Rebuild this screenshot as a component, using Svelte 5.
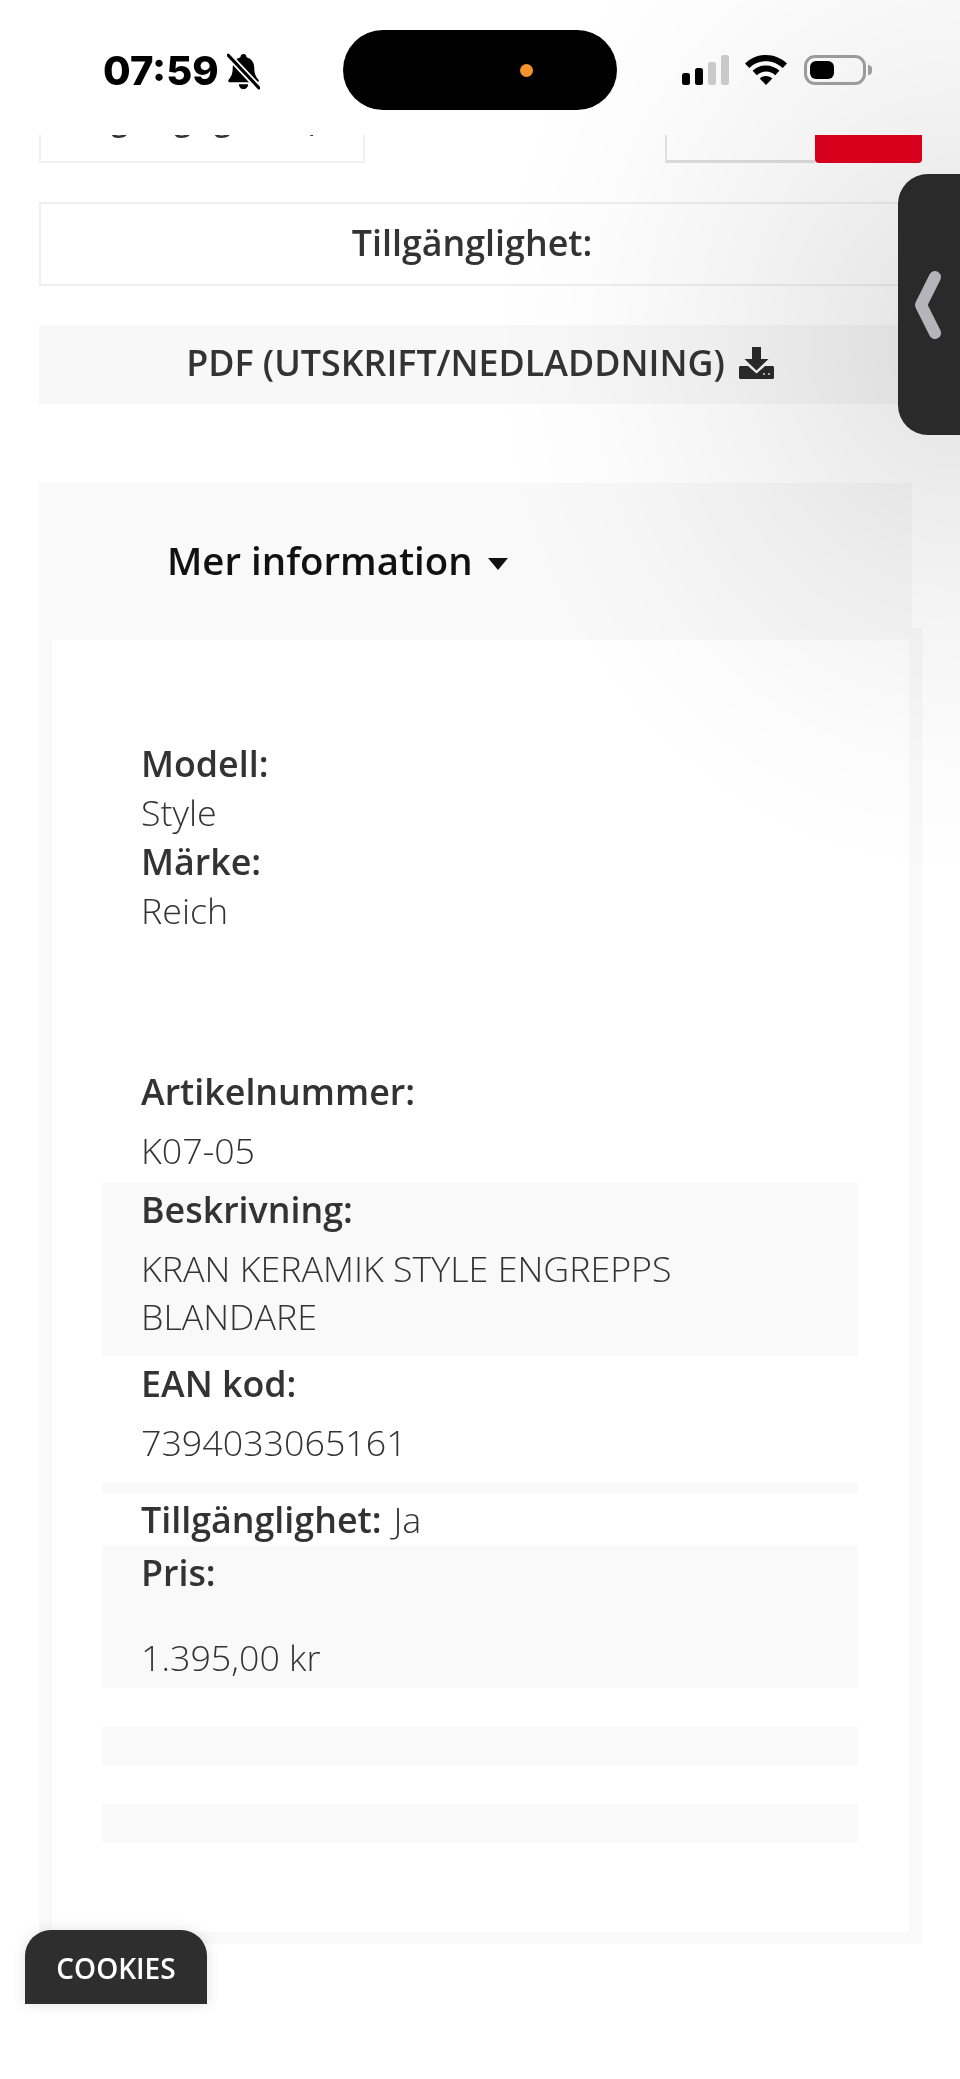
<script>
  const bars = [
    { x: 0, h: 12, on: true },
    { x: 13, h: 17, on: true },
    { x: 26, h: 23, on: false },
    { x: 39, h: 30, on: false }
  ];

  const rows = [
    { label: "Beskrivning:", value: ["KRAN KERAMIK STYLE ENGREPPS", "BLANDARE"], cls: "desc" },
    { label: "EAN kod:", value: ["7394033065161"], cls: "ean" }
  ];
</script>

<div class="page">
  <header class="status">
    <div class="left">
      <span class="time">07:59</span>
      <svg class="bell" viewBox="0 0 32 36" width="33" height="37" aria-hidden="true">
        <path d="M16 1c2 0 3 1.400 3 3.200 5 1.400 7.500 5.500 7.500 10.800 0 5 1.500 8 4 11 .8 1 .2 2.500-1.200 2.500H2.700c-1.400 0-2-1.500-1.200-2.500 2.500-3 4-6 4-11 0-5.300 2.500-9.400 7.500-10.800C13 2.400 14 1 16 1z" fill="#000" />
        <path d="M11.500 30.500h9c0 2.800-2 4.800-4.500 4.800s-4.500-2-4.500-4.800z" fill="#000" />
        <path d="M1 2l30 32" stroke="#fff" stroke-width="6.500" />
        <path d="M1 2l30 32" stroke="#000" stroke-width="3" stroke-linecap="round" />
      </svg>
    </div>
    <div class="island"><span class="dot"></span></div>
    <div class="right">
      <svg class="signal" viewBox="0 0 47 30" width="47" height="30" aria-hidden="true">
        {#each bars as b}
          <rect x={b.x} y={30 - b.h} width="8" height={b.h} rx="2.500" fill={b.on ? "#000" : "#c9c9c9"} />
        {/each}
      </svg>
      <svg class="wifi" viewBox="0 0 42 30" width="42" height="30" aria-hidden="true">
        <path d="M21 0C13 0 6 3 0 8.500l4.300 4.500C9 8.600 14.700 6.200 21 6.200S33 8.600 37.700 13L42 8.500C36 3 29 0 21 0z" />
        <path d="M21 10.500c-5.200 0-9.800 2-13.400 5.300l4.200 4.400c2.500-2.200 5.700-3.600 9.200-3.600s6.700 1.400 9.200 3.600l4.200-4.400C30.800 12.500 26.200 10.500 21 10.500z" />
        <path d="M21 21c-2.500 0-4.700.9-6.300 2.400L21 30l6.300-6.600C25.700 21.900 23.500 21 21 21z" />
      </svg>
      <div class="battery"><span class="charge"></span></div>
      <span class="nub"></span>
    </div>
  </header>

  <div class="cut">
    <div class="field">
      <div class="clip">
        <span class="g1">g</span><span class="g2">g</span><span class="g3">g</span><span class="g4">,</span>
      </div>
    </div>
    <div class="buy">
      <div class="qty"></div>
      <div class="red"></div>
    </div>
  </div>

  <div class="stock">Tillgänglighet:</div>

  <div class="pdf">
    <span>PDF (UTSKRIFT/NEDLADDNING)</span>
    <svg viewBox="0 0 35 32" width="35" height="32" aria-hidden="true">
      <path d="M13 0h9v12h7.500L17.500 23.500 5.500 12H13z" fill="#2b2b2b" />
      <path d="M1.500 19H9l8.500 7.500L26 19h7.500c.8 0 1.500.7 1.500 1.500v10c0 .8-.7 1.500-1.500 1.500h-32C.7 32 0 31.300 0 30.500v-10C0 19.700.7 19 1.500 19z" fill="#2b2b2b" />
      <circle cx="25" cy="27" r="1" fill="#ddd" />
      <circle cx="30" cy="27" r="1" fill="#ddd" />
    </svg>
  </div>

  <section class="more">
    <div class="more-head">
      <span>Mer information</span>
      <i class="caret"></i>
    </div>
    <div class="more-body">
      <div class="inner">
        <div class="specs">
          <b>Modell:</b>
          <span>Style</span>
          <b>Märke:</b>
          <span>Reich</span>
        </div>

        <div class="row art">
          <b>Artikelnummer:</b>
          <p>K07-05</p>
        </div>

        {#each rows as r}
          <div class="row {r.cls}">
            <b>{r.label}</b>
            <p>
              {#each r.value as line}
                <span>{line}</span>
              {/each}
            </p>
          </div>
        {/each}

        <div class="band thin"></div>
        <div class="row avail"><b>Tillgänglighet:</b> <em>Ja</em></div>
        <div class="row price">
          <b>Pris:</b>
          <p>1.395,00 kr</p>
        </div>
        <div class="band first"></div>
        <div class="band second"></div>
      </div>
    </div>
  </section>

  <div class="shade"></div>

  <div class="handle">
    <svg viewBox="0 0 34 76" width="34" height="76" aria-hidden="true">
      <path d="M25 10L11 38l14 28" fill="none" stroke="#b4b4ba" stroke-width="12" stroke-linecap="round" stroke-linejoin="round" />
    </svg>
  </div>

  <div class="cookies">COOKIES</div>
</div>

<style>
  :global(body) {
    margin: 0;
    background: #fff;
  }

  .page {
    position: relative;
    width: 960px;
    height: 2079px;
    overflow: hidden;
    background: #fff;
    color: #333;
    font-family: "Open Sans", "Liberation Sans", sans-serif;
  }

  .status {
    position: relative;
    height: 135px;
    z-index: 3;
  }

  .left {
    position: absolute;
    left: 103px;
    top: 50px;
    display: flex;
    align-items: center;
    gap: 8px;
  }

  .time {
    font-family: Inter, "Liberation Sans", sans-serif;
    font-weight: 800;
    font-size: 40px;
    line-height: 42px;
    color: #000;
  }

  .bell {
    display: block;
  }

  .island {
    position: absolute;
    left: 343px;
    top: 30px;
    width: 274px;
    height: 80px;
    border-radius: 40px;
    background: #000;
  }

  .dot {
    position: absolute;
    left: 177px;
    top: 34px;
    width: 13px;
    height: 13px;
    border-radius: 50%;
    background: #f7932e;
  }

  .right {
    position: absolute;
    left: 682px;
    top: 55px;
    display: flex;
    align-items: center;
    height: 30px;
  }

  .signal {
    margin-right: 16px;
  }

  .wifi {
    margin-right: 17px;
  }

  .battery {
    box-sizing: border-box;
    width: 62px;
    height: 30px;
    padding: 3px;
    border: 3px solid #9b9b9b;
    border-radius: 11px;
  }

  .charge {
    display: block;
    width: 24px;
    height: 18px;
    border-radius: 6px;
    background: #000;
  }

  .nub {
    width: 4px;
    height: 10px;
    margin-left: 2px;
    border-radius: 0 4px 4px 0;
    background: #9b9b9b;
  }

  .cut {
    display: flex;
    justify-content: space-between;
    height: 28px;
    padding: 0 38px 0 39px;
  }

  .field {
    box-sizing: border-box;
    width: 326px;
    border: 2px solid #f0f0f0;
    border-top: 0;
  }

  .clip {
    position: relative;
    height: 5px;
    overflow: hidden;
    font-size: 32px;
    font-weight: 600;
    color: #333;
  }

  .clip span {
    position: absolute;
    top: -39px;
  }

  .g1 { left: 70px; }
  .g2 { left: 133px; }
  .g3 { left: 173px; }
  .clip .g4 { left: 268px; top: -37px; }

  .buy {
    display: flex;
    width: 257px;
  }

  .qty {
    box-sizing: border-box;
    width: 150px;
    border-left: 2px solid #e4e4e4;
    border-bottom: 3px solid #dedede;
  }

  /* stays above the shade, the reference keeps this red at full strength */
  .red {
    position: relative;
    z-index: 3;
    flex: 1;
    border-radius: 0 0 4px 4px;
    background: #d6001c;
  }

  .stock {
    box-sizing: border-box;
    display: flex;
    align-items: center;
    justify-content: center;
    width: 866px;
    height: 84px;
    margin: 39px 0 0 39px;
    padding-bottom: 5px;
    border: 2px solid #f0f0f0;
    font-size: 35.8px;
    font-weight: 600;
  }

  .pdf {
    box-sizing: border-box;
    display: flex;
    align-items: center;
    justify-content: center;
    gap: 14px;
    width: 882px;
    height: 79px;
    margin: 39px 0 0 39px;
    padding-bottom: 6px;
    background: #f8f8f8;
    font-size: 35.8px;
    font-weight: 600;
  }

  .pdf svg {
    margin-top: 2px;
  }

  .more {
    margin: 79px 0 0 39px;
    width: 883px;
  }

  .more-head {
    display: flex;
    align-items: center;
    gap: 15px;
    box-sizing: border-box;
    width: 873px;
    height: 145px;
    padding: 8px 0 0 128px;
    background: #f9f9f9;
    font-size: 38.4px;
    font-weight: 600;
    color: #111;
  }

  .caret {
    width: 0;
    height: 0;
    margin-top: 8px;
    border-left: 10px solid transparent;
    border-right: 10px solid transparent;
    border-top: 12px solid #111;
  }

  .more-body {
    padding: 12px 13px 12px 13px;
    background: #f9f9f9;
  }

  .inner {
    box-sizing: border-box;
    height: 1292px;
    padding: 99px 51px 0 50px;
    background: #fff;
    font-size: 35.8px;
    line-height: 49px;
  }

  .inner b {
    font-weight: 600;
  }

  .specs {
    display: flex;
    flex-direction: column;
    padding-left: 39px;
  }

  .specs span,
  .row p,
  .row em {
    font-weight: 300;
    font-style: normal;
  }

  .row {
    box-sizing: border-box;
    padding-left: 39px;
  }

  .row b {
    display: block;
  }

  .row p {
    margin: 10px 0 0;
  }

  .row p span {
    display: block;
  }

  .art {
    height: 116px;
    margin-top: 132px;
  }

  .desc {
    height: 173px;
    padding-top: 2px;
    background: #f9f9f9;
  }

  .desc p span + span {
    margin-top: -1px;
  }

  .ean {
    height: 127px;
    padding-top: 3px;
  }

  .band {
    background: #f9f9f9;
  }

  .thin {
    height: 10px;
  }

  .avail {
    display: flex;
    gap: 12px;
    height: 52px;
    padding-top: 2px;
  }

  .price {
    height: 143px;
    padding-top: 3px;
    background: #f9f9f9;
  }

  .price p {
    margin-top: 36px;
  }

  .first {
    height: 38px;
    margin-top: 39px;
  }

  .second {
    height: 39px;
    margin-top: 39px;
  }

  .shade {
    position: absolute;
    inset: 0;
    z-index: 2;
    pointer-events: none;
    mix-blend-mode: multiply;
    background: radial-gradient(ellipse 470px 540px at 100% 340px, rgba(0, 0, 0, 0.115), rgba(0, 0, 0, 0.045) 50%, rgba(0, 0, 0, 0.012) 80%, rgba(0, 0, 0, 0) 100%);
  }

  .handle {
    position: absolute;
    right: 0;
    top: 174px;
    z-index: 4;
    display: flex;
    align-items: center;
    width: 62px;
    height: 261px;
    border-radius: 30px 0 0 30px;
    background: #2a2a2a;
    padding-left: 12px;
    box-sizing: border-box;
  }

  .cookies {
    box-sizing: border-box;
    position: absolute;
    left: 25px;
    top: 1930px;
    z-index: 4;
    display: flex;
    align-items: center;
    justify-content: center;
    width: 182px;
    height: 74px;
    padding-top: 2px;
    border-radius: 26px 26px 0 0;
    background: #2e2e2e;
    box-shadow: 0 0 14px rgba(0, 0, 0, 0.12);
    color: #fff;
    font-size: 28px;
    font-weight: 600;
  }
</style>
